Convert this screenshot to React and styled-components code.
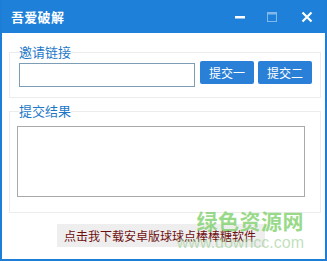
import React from 'react';
import styled, { createGlobalStyle } from 'styled-components';

const GlobalStyle = createGlobalStyle`
  html, body {
    margin: 0;
    padding: 0;
    background: #ffffff;
  }
  body {
    font-family: "Microsoft YaHei", "Noto Sans CJK SC", "Noto Sans", sans-serif;
  }
`;

const Window = styled.div`
  position: relative;
  width: 327px;
  height: 261px;
  box-sizing: border-box;
  border: 2px solid #1d7ed6;
  border-top: none;
  background: #ffffff;
  display: flex;
  flex-direction: column;
  overflow: hidden;
`;

const TitleBar = styled.div`
  height: 33px;
  margin: 0 -2px;
  background: #1e80d8;
  display: flex;
  align-items: center;
  padding: 0 0 0 11px;
  color: #ffffff;
`;

const Title = styled.div`
  flex: 1;
  font-size: 13px;
  font-weight: bold;
  letter-spacing: 0.3px;
`;

const Controls = styled.div`
  display: flex;
  align-items: center;
  height: 100%;
  padding-right: 2px;
`;

const ControlButton = styled.div`
  width: ${(p) => p.$w}px;
  height: 33px;
  display: flex;
  align-items: center;
  justify-content: center;
  opacity: ${(p) => (p.$dim ? 0.45 : 1)};
`;

const Body = styled.div`
  flex: 1;
  display: flex;
  flex-direction: column;
  padding: 9px 4px 0 7px;
`;

const Group = styled.fieldset`
  margin: ${(p) => p.$top || 0}px 0 0 0;
  padding: ${(p) => p.$pad};
  border: 1px solid #ececec;
  min-width: 0;
`;

const Legend = styled.legend`
  margin-left: ${(p) => p.$indent || 0}px;
  padding: 0;
  font-size: 13px;
  line-height: 20px;
  color: #1e78c8;
`;

const LinkRow = styled.div`
  display: flex;
  align-items: flex-start;
  gap: 4px;
`;

const LinkInput = styled.input`
  width: 176px;
  height: 24px;
  box-sizing: border-box;
  margin: 1px 1px 0 0;
  border: 1px solid #7d9cb6;
  outline: none;
  padding: 0 4px;
`;

const SubmitButton = styled.button`
  width: 54px;
  height: 23px;
  margin-top: -1px;
  border: none;
  border-radius: 2px;
  background: #2a80d6;
  color: #ffffff;
  font-family: inherit;
  font-size: 12px;
  padding: 0;
  line-height: 23px;
`;

const ResultArea = styled.textarea`
  display: block;
  width: 288px;
  height: 71px;
  box-sizing: border-box;
  border: 1px solid #a9a9a9;
  resize: none;
  outline: none;
  margin: 0;
`;

const Footer = styled.div`
  display: flex;
  padding: 11px 0 0 48px;
`;

const DownloadLink = styled.div`
  width: 208px;
  height: 23px;
  box-sizing: border-box;
  padding-left: 7px;
  background: #eeeeee;
  color: #6e1010;
  font-size: 12px;
  line-height: 24px;
  white-space: nowrap;
`;

const Watermark = styled.div`
  position: absolute;
  right: 21px;
  top: 208px;
  display: flex;
  flex-direction: column;
  align-items: flex-end;
  pointer-events: none;
`;

const WatermarkTitle = styled.div`
  font-size: 21px;
  font-weight: bold;
  letter-spacing: 0.5px;
  line-height: 24px;
  color: rgba(120, 205, 100, 0.75);
`;

const WatermarkUrl = styled.div`
  margin-top: 2px;
  font-family: "Liberation Sans", Arial, sans-serif;
  font-size: 16px;
  line-height: 18px;
  color: rgba(140, 200, 130, 0.55);
`;

const MinimizeIcon = () => (
  <svg width="12" height="12" viewBox="0 0 12 12">
    <rect x="1" y="5" width="10" height="2.5" fill="#ffffff" />
  </svg>
);

const MaximizeIcon = () => (
  <svg width="10" height="10" viewBox="0 0 10 10">
    <rect x="0.5" y="0.5" width="9" height="9" fill="none" stroke="#ffffff" />
    <rect x="0.5" y="0.5" width="9" height="2" fill="#ffffff" />
  </svg>
);

const CloseIcon = () => (
  <svg width="12" height="12" viewBox="0 0 12 12">
    <path d="M1.5 1.5 L10.5 10.5 M10.5 1.5 L1.5 10.5" stroke="#ffffff" strokeWidth="2.2" />
  </svg>
);

const App = () => {
  return (
    <>
      <GlobalStyle />
      <Window>
        <TitleBar>
          <Title>吾爱破解</Title>
          <Controls>
            <ControlButton $w={33}><MinimizeIcon /></ControlButton>
            <ControlButton $w={32} $dim><MaximizeIcon /></ControlButton>
            <ControlButton $w={37}><CloseIcon /></ControlButton>
          </Controls>
        </TitleBar>
        <Body>
          <Group $pad="0 7px 10px 9px">
            <Legend>邀请链接</Legend>
            <LinkRow>
              <LinkInput />
              <SubmitButton>提交一</SubmitButton>
              <SubmitButton>提交二</SubmitButton>
            </LinkRow>
          </Group>
          <Group $top={3} $pad="5px 7px 15px 7px">
            <Legend $indent={2}>提交结果</Legend>
            <ResultArea />
          </Group>
          <Footer>
            <DownloadLink>点击我下载安卓版球球点棒棒糖软件</DownloadLink>
          </Footer>
        </Body>
        <Watermark>
          <WatermarkTitle>绿色资源网</WatermarkTitle>
          <WatermarkUrl>www.downcc.com</WatermarkUrl>
        </Watermark>
      </Window>
    </>
  );
};

export default App;
